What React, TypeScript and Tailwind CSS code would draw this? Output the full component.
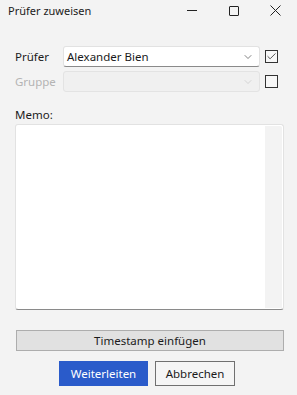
import { Check, ChevronDown } from 'lucide-react';

const font = { fontFamily: '"Segoe UI", "Noto Sans", "Open Sans", sans-serif' };

function Combo({ value, disabled }: { value?: string; disabled?: boolean }) {
  return (
    <div
      className={`flex items-center h-[21px] w-[197px] rounded-[3px] border pl-[3px] pr-[5px] ${
        disabled
          ? 'bg-[#f0f0f0] border-[#e3e3e3]'
          : 'bg-white border-[#e2e2e2] border-b-[#8a8a8a]'
      }`}
    >
      <span className="flex-1 text-[11.5px] text-[#1a1a1a] leading-none">{value}</span>
      <ChevronDown
        className={`w-[12px] h-[12px] ${disabled ? 'text-[#c4c4c4]' : 'text-[#404040]'}`}
        strokeWidth={1.3}
      />
    </div>
  );
}

function Box({ checked }: { checked?: boolean }) {
  return (
    <div className="w-[13px] h-[13px] border border-[#333333] bg-[#f7f7f7] flex items-center justify-center">
      {checked && <Check className="w-[11px] h-[11px] text-[#333333]" strokeWidth={1.8} />}
    </div>
  );
}

export default function App() {
  return (
    <div className="w-[297px] h-[395px] bg-[#f3f3f3] flex flex-col" style={font}>
      {/* Title bar */}
      <div className="flex items-center h-[21px] pl-[8px]">
        <span className="flex-1 text-[11px] text-[#1b1b1b] pt-[1px]">Prüfer zuweisen</span>
        <div className="flex items-center">
          <div className="w-[42px] flex justify-center">
            <div className="w-[10px] h-[1px] bg-[#222]" />
          </div>
          <div className="w-[42px] flex justify-center">
            <div className="w-[10px] h-[10px] border border-[#222] rounded-[1px]" />
          </div>
          <div className="w-[42px] flex justify-center pr-[2px]">
            <svg width="11" height="11" viewBox="0 0 11 11">
              <path d="M0.5 0.5 L10.5 10.5 M10.5 0.5 L0.5 10.5" stroke="#222" strokeWidth="1" />
            </svg>
          </div>
        </div>
      </div>

      <div className="flex flex-col px-[15px] pt-[25px]">
        <div className="flex items-center">
          <span className="w-[48px] text-[11.5px] text-[#1b1b1b]">Prüfer</span>
          <Combo value="Alexander Bien" />
          <div className="ml-[5px]">
            <Box checked />
          </div>
        </div>
        <div className="flex items-center mt-[4px]">
          <span className="w-[48px] text-[11.5px] text-[#b4b4b4]">Gruppe</span>
          <Combo disabled />
          <div className="ml-[5px]">
            <Box />
          </div>
        </div>

        <span className="mt-[15px] text-[11.5px] text-[#1b1b1b] leading-[16px]">Memo:</span>
        <div className="mt-[1px] h-[186px] w-[269px] rounded-[3px] border border-[#e2e2e2] border-b-[#8a8a8a] bg-white flex">
          <div className="flex-1" />
          <div className="w-[17px] bg-[#f3f3f3] my-[1px] mr-[1px] rounded-tr-[2px]" />
        </div>

        <button className="mt-[20px] ml-[1px] h-[21px] w-[268px] bg-[#e1e1e1] border border-[#adadad] text-[11.5px] text-[#1b1b1b] flex items-center justify-center">
          Timestamp einfügen
        </button>

        <div className="flex mt-[10px] ml-[44px] gap-[7px]">
          <button className="h-[25px] w-[89px] bg-[#2a5bca] text-white text-[11.5px] flex items-center justify-center">
            Weiterleiten
          </button>
          <button className="h-[25px] w-[80px] border border-[#707070] bg-[#f5f5f5] text-[11.5px] text-[#1b1b1b] flex items-center justify-center">
            Abbrechen
          </button>
        </div>
      </div>
    </div>
  );
}
